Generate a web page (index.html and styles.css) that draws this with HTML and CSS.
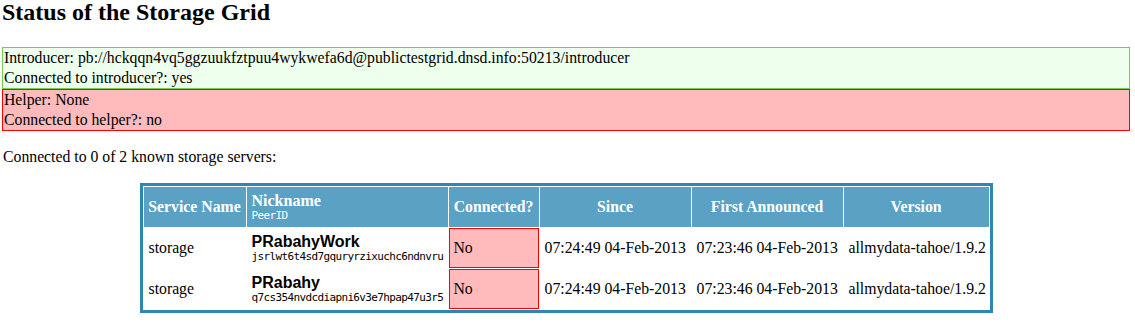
FILE: index.html
```html
<!DOCTYPE html>
<html>
<head>
<meta charset="utf-8">
<title>Tahoe-LAFS - Welcome</title>
<link rel="stylesheet" href="styles.css">
</head>
<body>
<h2 class="title">Status of the Storage Grid</h2>
<div class="status connected-yes">
  <div>Introducer: pb://hckqqn4vq5ggzuukfztpuu4wykwefa6d@publictestgrid.dnsd.info:50213/introducer</div>
  <div>Connected to introducer?: yes</div>
</div>
<div class="status connected-no">
  <div>Helper: None</div>
  <div>Connected to helper?: no</div>
</div>
<p class="summary">Connected to 0 of 2 known storage servers:</p>
<table class="services">
  <thead>
    <tr>
      <th class="c-service">Service Name</th>
      <th class="c-nick nickname-and-peerid"><div class="head-nick">Nickname</div><div class="peerid">PeerID</div></th>
      <th class="c-conn">Connected?</th>
      <th class="c-since">Since</th>
      <th class="c-first">First Announced</th>
      <th class="c-version">Version</th>
    </tr>
  </thead>
  <tbody>
    <tr>
      <td>storage</td>
      <td class="nickname-and-peerid"><div class="nickname">PRabahyWork</div><div class="peerid">jsrlwt6t4sd7gquryrzixuchc6ndnvru</div></td>
      <td class="service-disconnected">No</td>
      <td>07:24:49 04-Feb-2013</td>
      <td>07:23:46 04-Feb-2013</td>
      <td>allmydata-tahoe/1.9.2</td>
    </tr>
    <tr>
      <td>storage</td>
      <td class="nickname-and-peerid"><div class="nickname">PRabahy</div><div class="peerid">q7cs354nvdcdiapni6v3e7hpap47u3r5</div></td>
      <td class="service-disconnected">No</td>
      <td>07:24:49 04-Feb-2013</td>
      <td>07:23:46 04-Feb-2013</td>
      <td>allmydata-tahoe/1.9.2</td>
    </tr>
  </tbody>
</table>
</body>
</html>
```
FILE: styles.css
```css
html, body {
  background: #ffffff;
}
body {
  margin: 0 5px 0 2px;
  font-family: "Liberation Serif", "Times New Roman", serif;
  font-size: 15.75px;
  color: #000;
}
.title {
  margin: 0 0 23px 0;
  font-size: 24px;
  line-height: 24px;
  font-weight: bold;
}
.status {
  line-height: 20px;
  padding: 0 0 0 1px;
}
.connected-yes {
  border: 1px solid #75cc4d;
  background-color: #eeffee;
}
.connected-no {
  border: 1px solid #ff0000;
  background-color: #ffbbbb;
}
.summary {
  margin: 16px 0;
  padding-left: 1px;
  line-height: 20px;
}
.services {
  margin: 0 auto;
  border: 3px solid #2f86b2;
  border-collapse: separate;
  border-spacing: 1px;
  table-layout: fixed;
  width: 853px;
}
.services th,
.services td {
  box-sizing: border-box;
  height: 40px;
  padding: 0 3px 0 5px;
  vertical-align: middle;
  white-space: nowrap;
  overflow: visible;
}
.services th {
  background-color: #5aa1c4;
  color: #ffffff;
  font-weight: bold;
  text-align: center;
  padding: 0 2px;
}
.services td {
  text-align: left;
}
.services th.nickname-and-peerid {
  text-align: left;
  padding-left: 5px;
}
.c-service { width: 102px; }
.c-nick { width: 201px; }
.c-conn { width: 90px; }
.c-since { width: 151px; }
.c-first { width: 151px; }
.c-version { width: 145px; }
.head-nick {
  font-size: 16px;
  line-height: 18px;
}
.nickname {
  font-family: "Liberation Sans", Arial, sans-serif;
  font-weight: bold;
  font-size: 16px;
  line-height: 18px;
}
.peerid {
  font-family: "DejaVu Sans Mono", monospace;
  font-size: 11px;
  letter-spacing: -0.63px;
  font-weight: normal;
  line-height: 12px;
}
.services td.service-disconnected {
  border: 1px solid #ff0000;
  background-color: #ffbbbb;
  padding-left: 4px;
}
```
